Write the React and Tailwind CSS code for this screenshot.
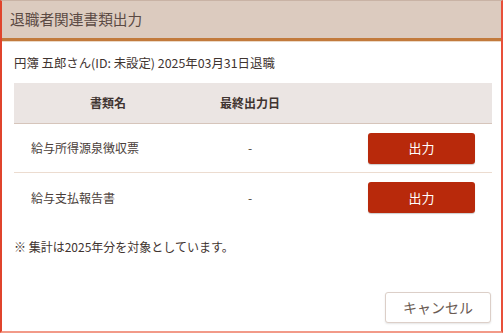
import React from 'react';

const FONT = { fontFamily: '"Noto Sans CJK JP", "Noto Sans", sans-serif' };

const DOCS = [
  { name: '給与所得源泉徴収票', last: '-' },
  { name: '給与支払報告書', last: '-' },
];

export default function App() {
  return (
    <div className="w-[503px] h-[333px] bg-white overflow-hidden" style={FONT}>
      <div className="h-full flex flex-col border-l-2 border-l-[#e0442c] border-r-2 border-r-[#e8503a] border-b-2 border-b-[#f29a88] border-t border-t-[#c9b3a5]">
        {/* header */}
        <div className="h-[37px] bg-[#dccbbf] flex items-center pl-[8px]">
          <h1 className="text-[14.7px] text-[#5b4a44]">退職者関連書類出力</h1>
        </div>
        <div className="h-[3px] bg-[#c27a3c]" />
        <div className="h-[1px] bg-[#ecd9c6]" />

        <div className="flex-1 flex flex-col px-[12px]">
          <p className="mt-[13px] text-[12.4px] leading-[16px] text-[#3f3430]">
            円簿 五郎さん(ID: 未設定) 2025年03月31日退職
          </p>

          <div className="mt-[12px] w-[478px]">
            <div className="flex h-[41px] bg-[#ebe5e3] border-b border-b-[#d6c5bb] items-center text-[12px] font-bold text-[#3f3430]">
              <div className="w-[188px] text-center">書類名</div>
              <div className="w-[96px] text-center">最終出力日</div>
              <div className="flex-1" />
            </div>
            {DOCS.map((d, i) => (
              <div
                key={d.name}
                className={`flex h-[49px] items-center text-[12px] text-[#4a3e3a] ${i === 0 ? 'border-b border-b-[#ecdcd0]' : ''}`}
              >
                <div className="w-[188px] pl-[17px]">{d.name}</div>
                <div className="w-[96px] text-center">{d.last}</div>
                <div className="flex-1 flex justify-end pr-[17px]">
                  <button className="w-[107px] h-[31px] rounded-[3px] bg-[#b8290b] text-white text-[13px] shadow-[0_1px_1px_rgba(0,0,0,0.2)]">
                    出力
                  </button>
                </div>
              </div>
            ))}
          </div>

          <p className="mt-[17px] text-[12px] leading-[16px] text-[#3f3430]">
            ※ 集計は2025年分を対象としています。
          </p>

          <div className="mt-auto mb-[8px] flex justify-end -mr-[2px]">
            <button className="w-[106px] h-[31px] rounded-[3px] bg-white border border-[#dccfc8] text-[14px] text-[#6a5a52] shadow-[0_1px_2px_rgba(0,0,0,0.1)]">
              キャンセル
            </button>
          </div>
        </div>
      </div>
    </div>
  );
}
